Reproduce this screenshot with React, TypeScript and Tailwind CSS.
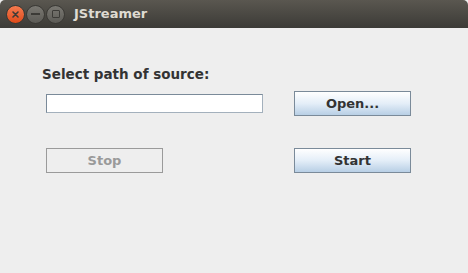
import React from "react";

function TitleButton({ kind }: { kind: "close" | "min" | "max" }) {
  if (kind === "close") {
    return (
      <div className="w-[19px] h-[19px] rounded-full bg-gradient-to-b from-[#f47a4e] to-[#df4a17] border border-[#3a3935] flex items-center justify-center">
        <svg width="9" height="9" viewBox="0 0 9 9">
          <path d="M2 2L7 7M7 2L2 7" stroke="#3c3b37" strokeWidth="1.6" strokeLinecap="round" />
        </svg>
      </div>
    );
  }
  return (
    <div className="w-[19px] h-[19px] rounded-full bg-gradient-to-b from-[#7a7872] to-[#5c5b56] border border-[#3a3935] flex items-center justify-center">
      {kind === "min" ? (
        <div className="w-[9px] h-[2px] bg-[#3c3b37]" />
      ) : (
        <div className="w-[8px] h-[8px] border-[1.5px] border-[#3c3b37] rounded-[1px]" />
      )}
    </div>
  );
}

function JButton({ label, disabled }: { label: string; disabled?: boolean }) {
  return disabled ? (
    <div className="w-[117px] h-[25px] border border-[#9a9a9a] bg-[#eeeeee] flex items-center justify-center text-[13px] font-bold text-[#9a9a9a]">
      {label}
    </div>
  ) : (
    <div className="w-[117px] h-[25px] border border-[#7a8a99] bg-gradient-to-b from-[#ffffff] via-[#e4eef8] to-[#b8cfe5] flex items-center justify-center text-[13px] font-bold text-[#333333]">
      {label}
    </div>
  );
}

export default function App() {
  return (
    <div
      className="w-[468px] h-[273px] flex flex-col bg-[#eeeeee] overflow-hidden"
      style={{ fontFamily: '"DejaVu Sans", sans-serif' }}
    >
      {/* Title bar */}
      <div className="h-[28px] shrink-0 rounded-t-[5px] bg-gradient-to-b from-[#5a5750] to-[#3c3b37] flex items-center pl-[6px]">
        <div className="flex items-center gap-[1px]">
          <TitleButton kind="close" />
          <TitleButton kind="min" />
          <TitleButton kind="max" />
        </div>
        <span className="ml-[9px] text-[13px] font-bold text-[#dfdbd2]">JStreamer</span>
      </div>

      {/* Body */}
      <div className="flex flex-col pt-[38px]">
        <div className="pl-[42px] text-[13.5px] font-bold text-[#333333] leading-[16px]">
          Select path of source:
        </div>
        <div className="flex items-center pl-[46px] mt-[9px]">
          <div className="w-[217px] h-[19px] bg-white border border-[#7a8a99] border-r-[#a3b0bc] border-b-[#a3b0bc]" />
          <div className="ml-[31px]">
            <JButton label="Open..." />
          </div>
        </div>
        <div className="flex items-center pl-[46px] mt-[32px]">
          <JButton label="Stop" disabled />
          <div className="ml-[131px]">
            <JButton label="Start" />
          </div>
        </div>
      </div>
    </div>
  );
}
